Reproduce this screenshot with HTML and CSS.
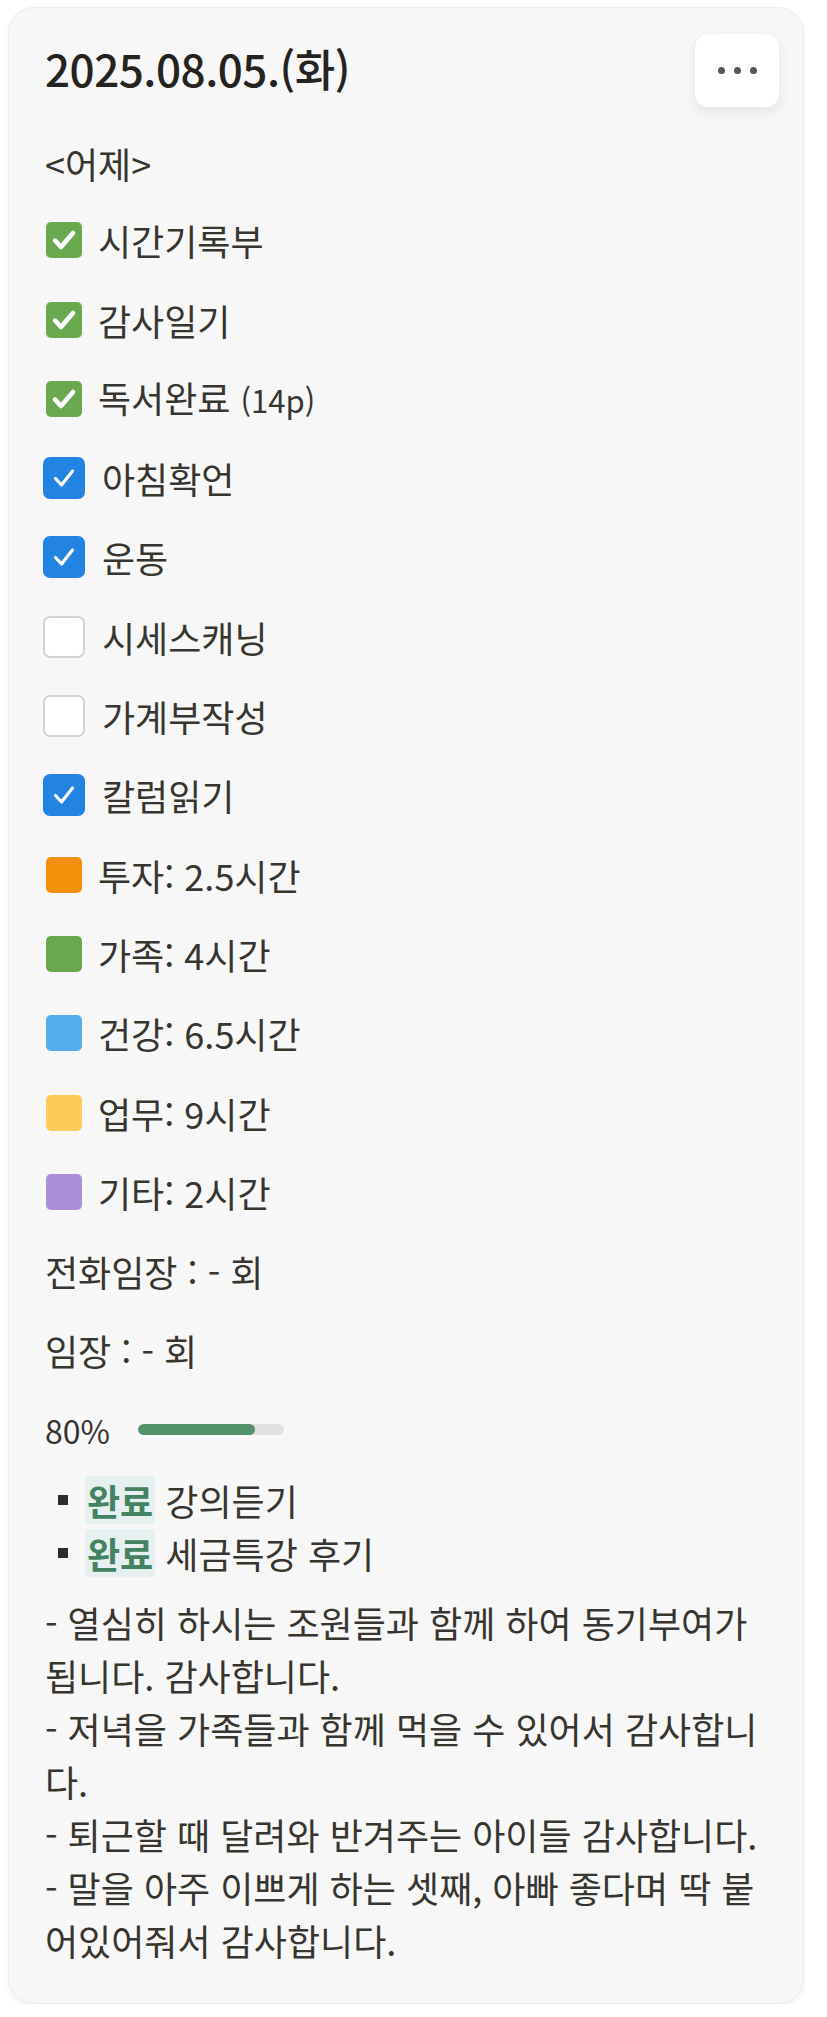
FILE: index.html
```html
<!DOCTYPE html>
<html lang="ko">
<head>
<meta charset="utf-8">
<title>2025.08.05.(화)</title>
<link rel="stylesheet" href="styles.css">
</head>
<body>
<div class="card">
  <div class="header">
    <h1 class="title">2025.08.05.(화)</h1>
    <button class="more" aria-label="더보기"><span></span><span></span><span></span></button>
  </div>
  <div class="list">
    <div class="row plain">&lt;어제&gt;</div>
    <div class="row emoji-row"><span class="icon"><span class="emoji-check"><svg viewBox="0 0 36 36"><path d="M9 18.5l6 6.5 12-14" fill="none" stroke="#fff" stroke-width="4.6" stroke-linecap="round" stroke-linejoin="round"/></svg></span></span><span class="label">시간기록부</span></div>
    <div class="row emoji-row"><span class="icon"><span class="emoji-check"><svg viewBox="0 0 36 36"><path d="M9 18.5l6 6.5 12-14" fill="none" stroke="#fff" stroke-width="4.6" stroke-linecap="round" stroke-linejoin="round"/></svg></span></span><span class="label">감사일기</span></div>
    <div class="row emoji-row"><span class="icon"><span class="emoji-check"><svg viewBox="0 0 36 36"><path d="M9 18.5l6 6.5 12-14" fill="none" stroke="#fff" stroke-width="4.6" stroke-linecap="round" stroke-linejoin="round"/></svg></span></span><span class="label">독서완료 <span class="small">(14p)</span></span></div>
    <div class="row box-row"><span class="icon"><span class="checkbox checked"><svg viewBox="0 0 42 42"><path d="M12.5 21.5l6 6.5 11-14" fill="none" stroke="#fff" stroke-width="3.2" stroke-linecap="round" stroke-linejoin="round"/></svg></span></span><span class="label">아침확언</span></div>
    <div class="row box-row"><span class="icon"><span class="checkbox checked"><svg viewBox="0 0 42 42"><path d="M12.5 21.5l6 6.5 11-14" fill="none" stroke="#fff" stroke-width="3.2" stroke-linecap="round" stroke-linejoin="round"/></svg></span></span><span class="label">운동</span></div>
    <div class="row box-row"><span class="icon"><span class="checkbox"></span></span><span class="label">시세스캐닝</span></div>
    <div class="row box-row"><span class="icon"><span class="checkbox"></span></span><span class="label">가계부작성</span></div>
    <div class="row box-row"><span class="icon"><span class="checkbox checked"><svg viewBox="0 0 42 42"><path d="M12.5 21.5l6 6.5 11-14" fill="none" stroke="#fff" stroke-width="3.2" stroke-linecap="round" stroke-linejoin="round"/></svg></span></span><span class="label">칼럼읽기</span></div>
    <div class="row emoji-row"><span class="icon"><span class="square orange"></span></span><span class="label">투자: 2.5시간</span></div>
    <div class="row emoji-row"><span class="icon"><span class="square green"></span></span><span class="label">가족: 4시간</span></div>
    <div class="row emoji-row"><span class="icon"><span class="square blue"></span></span><span class="label">건강: 6.5시간</span></div>
    <div class="row emoji-row"><span class="icon"><span class="square yellow"></span></span><span class="label">업무: 9시간</span></div>
    <div class="row emoji-row"><span class="icon"><span class="square purple"></span></span><span class="label">기타: 2시간</span></div>
    <div class="row plain">전화임장 : - 회</div>
    <div class="row plain">임장 : - 회</div>
    <div class="row progress-row">
      <span class="pct">80%</span>
      <span class="track"><span class="fill" style="width:80%"></span></span>
    </div>
  </div>
  <ul class="tasks">
    <li><span class="bullet"></span><span class="tag">완료</span> 강의듣기</li>
    <li><span class="bullet"></span><span class="tag">완료</span> 세금특강 후기</li>
  </ul>
  <p class="notes">- 열심히 하시는 조원들과 함께 하여 동기부여가<br>됩니다. 감사합니다.<br>- 저녁을 가족들과 함께 먹을 수 있어서 감사합니<br>다.<br>- 퇴근할 때 달려와 반겨주는 아이들 감사합니다.<br>- 말을 아주 이쁘게 하는 셋째, 아빠 좋다며 딱 붙<br>어있어줘서 감사합니다.</p>
</div>
</body>
</html>
```
FILE: styles.css
```css
* { box-sizing: border-box; }

html, body {
  margin: 0;
  padding: 0;
  background: #ffffff;
}

body {
  font-family: "Noto Sans CJK KR", "Noto Sans", sans-serif;
  color: #37352f;
  width: 827px;
}

.card {
  margin: 7px 0 0 8px;
  width: 796px;
  height: 1997px;
  background: #f7f7f7;
  border: 1px solid #ececec;
  border-radius: 26px;
  box-shadow: 0 3px 6px rgba(0, 0, 0, 0.06);
  padding: 25px 23px 0 36px;
}

.header {
  display: flex;
  justify-content: space-between;
  align-items: flex-start;
  height: 75px;
}

.title {
  margin: 5px 0 0 0;
  font-size: 44px;
  line-height: 60px;
  font-weight: 500;
  color: #25231f;
  letter-spacing: -0.5px;
}

.more {
  width: 86px;
  height: 75px;
  background: #ffffff;
  border: 1px solid #efefef;
  border-radius: 14px;
  box-shadow: 0 5px 12px rgba(0, 0, 0, 0.07);
  display: flex;
  align-items: center;
  justify-content: center;
  gap: 9px;
  padding: 0;
}

.more span {
  width: 7px;
  height: 7px;
  border-radius: 50%;
  background: #555555;
}

.list {
  display: flex;
  flex-direction: column;
  gap: 31.3px;
  margin-top: 31px;
}

.row {
  display: flex;
  align-items: center;
  height: 48px;
  font-size: 36px;
  line-height: 48px;
  white-space: nowrap;
}

.list .row:nth-child(2) { margin-top: -2px; }

.icon {
  width: 42px;
  height: 42px;
  display: flex;
  align-items: center;
  justify-content: center;
  flex: none;
  margin-left: -2px;
}

.emoji-row .label { margin-left: 13px; }
.box-row .label { margin-left: 17px; }

.emoji-check {
  width: 36px;
  height: 36px;
  border-radius: 5px;
  background: #6aa84f;
  display: block;
}

.emoji-check svg, .checkbox svg {
  display: block;
  width: 100%;
  height: 100%;
}

.checkbox {
  width: 42px;
  height: 42px;
  border-radius: 7px;
  border: 2px solid #d3d3d3;
  background: #ffffff;
  display: block;
}

.checkbox.checked {
  background: #2383e2;
  border: none;
}

.square {
  width: 36px;
  height: 36px;
  border-radius: 5px;
  display: block;
}

.orange { background: #f4900c; }
.green { background: #6aa84f; }
.blue { background: #55acee; }
.yellow { background: #fdcb58; }
.purple { background: #aa8ed6; }

.small { font-size: 31px; }

.progress-row {
  font-size: 32px;
  gap: 26px;
}

.pct { width: 67px; }

.track {
  width: 146px;
  height: 11px;
  border-radius: 6px;
  background: #e2e2e2;
  overflow: hidden;
  display: block;
}

.fill {
  display: block;
  height: 100%;
  background: #54936a;
  border-radius: 6px;
}

.tasks {
  list-style: none;
  margin: 20px 0 0 0;
  padding: 0 0 0 13px;
  font-size: 36px;
  line-height: 53px;
}

.tasks li {
  display: flex;
  align-items: center;
  white-space: pre;
}

.bullet {
  width: 10px;
  height: 10px;
  background: #2d2d2d;
  margin-right: 17px;
  flex: none;
}

.tag {
  font-weight: 700;
  color: #448361;
  background: #e6f0f1;
  padding: 0 2px;
  border-radius: 3px;
  line-height: 48px;
}

.notes {
  margin: 16px 0 0 0;
  font-size: 36px;
  line-height: 53px;
  white-space: nowrap;
}
```
